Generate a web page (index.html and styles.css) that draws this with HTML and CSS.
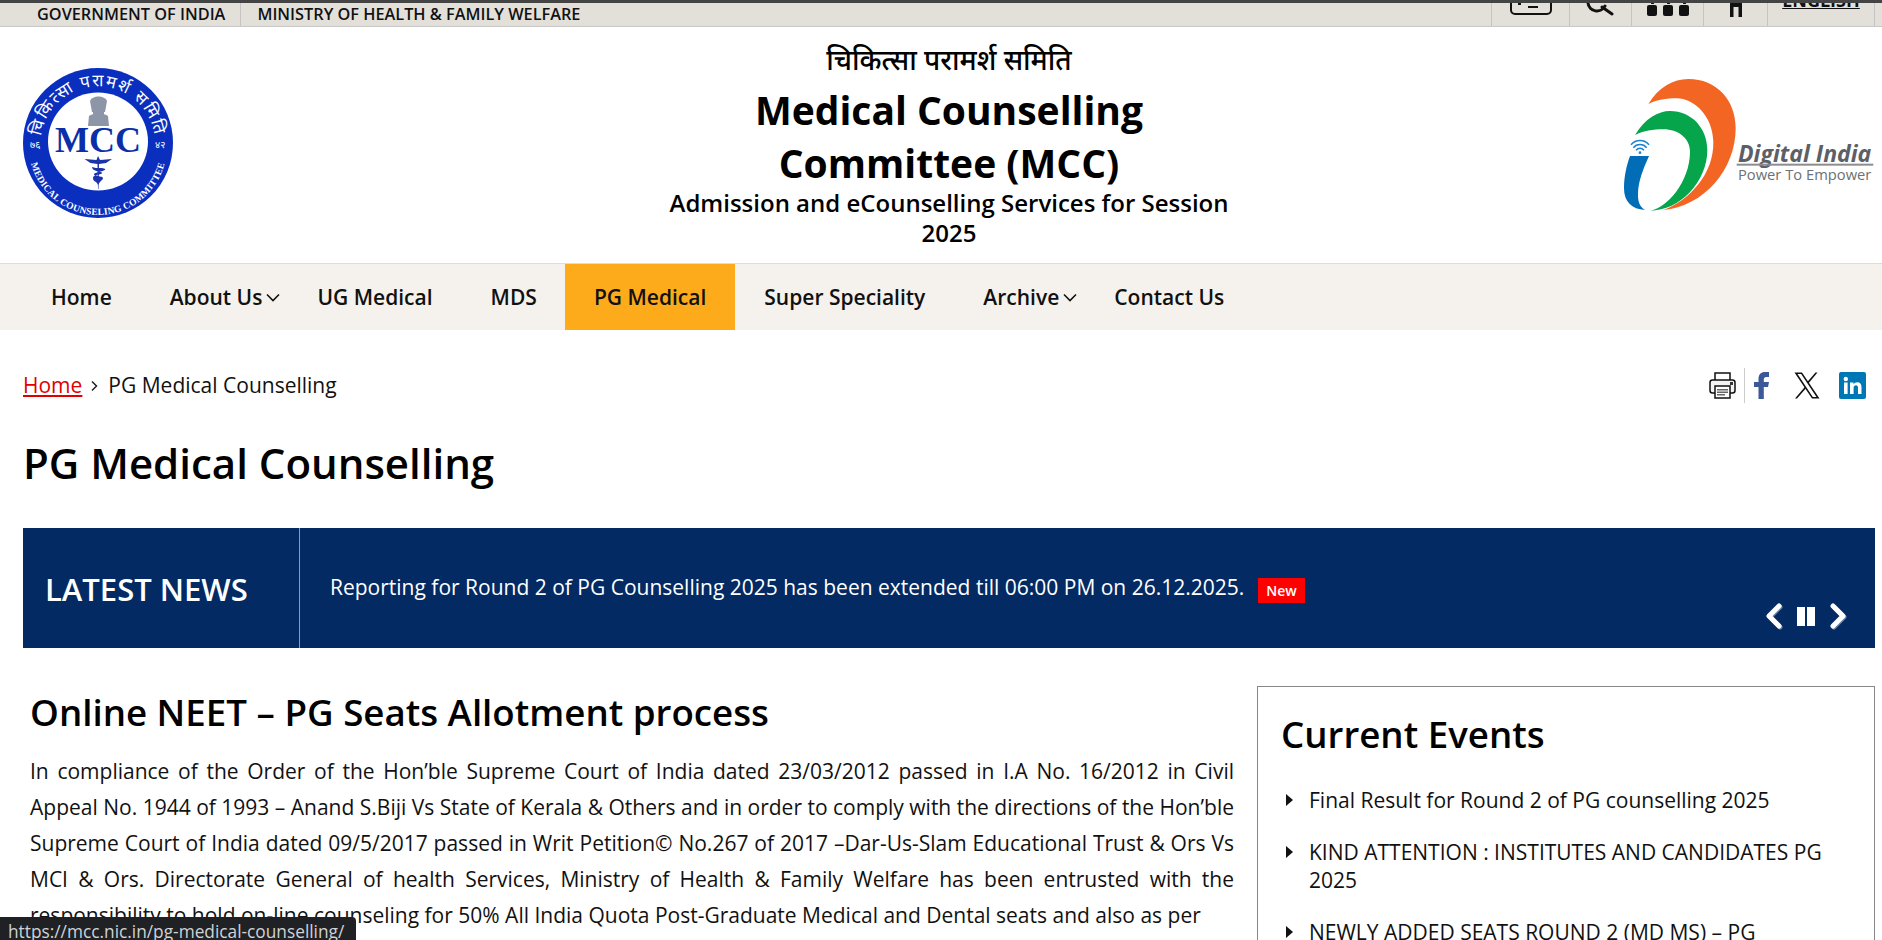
FILE: index.html
```html
<!DOCTYPE html>
<html lang="en">
<head>
<meta charset="utf-8">
<title>PG Medical Counselling</title>
<link rel="stylesheet" href="styles.css">
</head>
<body>
<div class="page">
  <div class="topbar">
    <ul class="gov">
      <li>GOVERNMENT OF INDIA</li>
      <li>MINISTRY OF HEALTH &amp; FAMILY WELFARE</li>
    </ul>
    <div class="tools">
      <div class="tool t1"><svg width="44" height="16" viewBox="0 0 44 16"><path d="M2 0V7a4 4 0 0 0 4 4H38a4 4 0 0 0 4-4V0" fill="none" stroke="#111" stroke-width="2"/><rect x="19" y="3" width="10" height="2" fill="#111"/><rect x="9" y="0" width="3" height="2" fill="#111"/></svg></div>
      <div class="tool t2"><svg width="30" height="16" viewBox="0 0 30 16"><path d="M2 0a9 9 0 0 0 17 3M16 4l10 7" fill="none" stroke="#111" stroke-width="3" stroke-linecap="round"/></svg></div>
      <div class="tool t3"><svg width="44" height="18" viewBox="0 0 44 18"><g fill="#111"><rect x="1" y="2" width="10" height="11" rx="2"/><rect x="17" y="2" width="10" height="11" rx="2"/><rect x="33" y="2" width="10" height="11" rx="2"/><rect x="5" y="0" width="3" height="1"/><rect x="21" y="0" width="3" height="1"/><rect x="37" y="0" width="3" height="1"/></g></svg></div>
      <div class="tool t4"><svg width="12" height="17" viewBox="0 0 12 17"><path d="M0 0H12V14H8.500V4H3.500V14H0Z" fill="#111"/></svg></div>
      <div class="tool t5"><span class="lang">ENGLISH</span></div>
      <div class="tool t6"></div>
    </div>
  </div>

  <header class="masthead">
    <div class="logo-left">
      <svg width="150" height="150" viewBox="0 0 150 150">
        <defs>
          <path id="arcTop" d="M18.400 82A57 57 0 1 1 131.600 82"/>
          <path id="arcBot" d="M6 78A69 69 0 0 0 144 78"/>
        </defs>
        <circle cx="75" cy="75" r="75" fill="#0a2fbf"/>
        <ellipse cx="75" cy="73.500" rx="50" ry="49" fill="#fff"/>
        <text class="arc-hi"><textPath href="#arcTop" startOffset="50%" text-anchor="middle">चिकित्सा परामर्श समिति</textPath></text>
        <text class="arc-en"><textPath href="#arcBot" startOffset="50%" text-anchor="middle">MEDICAL COUNSELING COMMITTEE</textPath></text>
        <text class="arc-n" x="7" y="80">७६</text>
        <text class="arc-n" x="132" y="80">४२</text>
        <g fill="#8d95a8">
          <path d="M67 33c2-6 15-6 17 0l-2 11H69Z"/>
          <path d="M66 48c3-3 16-3 19 0l1 10H65Z"/>
          <rect x="70" y="44" width="11" height="4"/>
        </g>
        <text class="mcc" x="75" y="84" text-anchor="middle">MCC</text>
        <g fill="#1a33a8">
          <path d="M75 88l-1.500 4-12-1 6 4 7 1 .5 25 .5 0 .5-25 7-1 6-4-12 1Z"/>
          <path d="M69 99c5 2 11 0 13 2s-10 3-11 5 9 2 9 4-3 3-5 7c-1-4-5-3-5-7s9-3 9-5-10-1-10-6Z"/>
        </g>
      </svg>
    </div>
    <div class="head-center">
      <div class="hindi">चिकित्सा परामर्श समिति</div>
      <h1 class="org">Medical Counselling<br>Committee (MCC)</h1>
      <div class="sub">Admission and eCounselling Services for Session 2025</div>
    </div>
    <div class="logo-right">
      <svg width="260" height="150" viewBox="510 210 780 450">
        <path d="M595 312C625 262 670 237 715 237C800 237 857 300 857 385C857 510 760 620 640 630C720 600 792 520 790 425C788 345 730 295 680 295C650 295 620 300 595 312Z" fill="#f36523"/>
        <path d="M555 405C585 355 625 333 660 333C725 333 772 385 772 450C772 545 690 632 600 632C650 625 720 545 720 455C720 415 685 388 640 388C610 388 580 393 555 405Z" fill="#06a44b"/>
        <path d="M540 468H597C578 510 565 545 564 580C563 605 570 622 585 630C545 628 522 605 522 565C522 530 530 495 540 468Z" fill="#006db6"/>
        <g fill="none" stroke="#1b82cf" stroke-width="4.500">
          <path d="M543 434A36 36 0 0 1 597 434"/>
          <path d="M550 443A26 26 0 0 1 590 443"/>
          <path d="M558 451A15 15 0 0 1 582 451"/>
        </g>
        <circle cx="570" cy="458" r="4" fill="#1b82cf"/>
        <text class="di-name" x="864" y="487" textLength="400" lengthAdjust="spacingAndGlyphs">Digital India</text>
        <rect x="860" y="491" width="410" height="6" fill="#8b8d90"/>
        <text class="di-tag" x="864" y="541" textLength="400" lengthAdjust="spacingAndGlyphs">Power To Empower</text>
      </svg>
    </div>
  </header>

  <nav class="nav">
    <a class="nav-item" href="#">Home</a>
    <a class="nav-item has-sub" href="#">About Us<svg class="chev" width="14" height="9" viewBox="0 0 14 9"><path d="M1 1.500 7 7.500l6-6" fill="none" stroke="#111" stroke-width="1.600"/></svg></a>
    <a class="nav-item" href="#">UG Medical</a>
    <a class="nav-item" href="#">MDS</a>
    <a class="nav-item active" href="#">PG Medical</a>
    <a class="nav-item" href="#">Super Speciality</a>
    <a class="nav-item has-sub" href="#">Archive<svg class="chev" width="14" height="9" viewBox="0 0 14 9"><path d="M1 1.500 7 7.500l6-6" fill="none" stroke="#111" stroke-width="1.600"/></svg></a>
    <a class="nav-item" href="#">Contact Us</a>
  </nav>

  <main class="content">
    <div class="crumbs">
      <div class="trail"><a class="crumb-link" href="#">Home</a><svg class="crumb-sep" width="9" height="12" viewBox="0 0 9 12"><path d="M2 1.500 6.500 6 2 10.500" fill="none" stroke="#222" stroke-width="1.500"/></svg><span>PG Medical Counselling</span></div>
      <div class="share">
        <svg class="ic-print" width="27" height="27" viewBox="0 0 27 27"><g fill="none" stroke="#111" stroke-width="1.500"><path d="M6 8V1H21V8"/><rect x="1" y="8" width="25" height="13" rx="2.500" fill="#f4f4f4"/><rect x="6" y="14" width="15" height="12" fill="#fff"/></g><rect x="21" y="10" width="3" height="3" fill="#333"/><g fill="#666"><rect x="8" y="17" width="11" height="1.500"/><rect x="8" y="19.500" width="11" height="1.500"/><rect x="8" y="22" width="8" height="1.500"/></g></svg>
        <span class="share-sep"></span>
        <svg class="ic-fb" width="15" height="27" viewBox="0 0 15 27"><path d="M4.500 27V15H0V10H4.500V7C4.500 2.500 7 0 11 0H15V5H12.500C10.500 5 9.800 6 9.800 7.500V10H15L14 15H9.800V27Z" fill="#3b5998"/></svg>
        <svg class="ic-x" width="26" height="27" viewBox="0 0 26 27"><path d="M0.500 0.500H8L25.500 26.500H18ZM3.500 2.100 18.800 24.900H22.500L7.200 2.100Z" fill="#111" fill-rule="evenodd"/><path d="M23.500 0.500 14.500 11.200 13.500 9.800 21.500 0.500ZM11 14.800 12 16.200 3 26.500H1Z" fill="#111"/></svg>
        <svg class="ic-in" width="27" height="27" viewBox="0 0 27 27"><rect width="27" height="27" rx="2" fill="#0077b5"/><rect x="5" y="10.500" width="3.600" height="11.500" fill="#fff"/><circle cx="6.800" cy="7" r="2.200" fill="#fff"/><path d="M11 10.500H14.500V12.200C15.300 11 16.600 10.200 18.200 10.200 21 10.200 22.500 12 22.500 15.200V22H19V15.800C19 14.200 18.300 13.200 17 13.200S14.600 14.200 14.600 15.800V22H11Z" fill="#fff"/></svg>
      </div>
    </div>

    <h1 class="page-title">PG Medical Counselling</h1>

    <section class="news">
      <div class="news-label">LATEST NEWS</div>
      <div class="news-body">
        <p class="news-text">Reporting for Round 2 of PG Counselling 2025 has been extended till 06:00 PM on 26.12.2025.<span class="badge">New</span></p>
        <div class="news-ctrl">
          <svg class="ctrl-arrow" width="16" height="26" viewBox="0 0 16 26"><path d="M13 3 3 13l10 10" fill="none" stroke="#fff" stroke-width="5" stroke-linecap="round" stroke-linejoin="round"/></svg>
          <svg width="18" height="19" viewBox="0 0 18 19"><rect width="8" height="19" fill="#fff"/><rect x="10" width="8" height="19" fill="#fff"/></svg>
          <svg class="ctrl-arrow" width="16" height="26" viewBox="0 0 16 26"><path d="M3 3l10 10L3 23" fill="none" stroke="#fff" stroke-width="5" stroke-linecap="round" stroke-linejoin="round"/></svg>
        </div>
      </div>
    </section>

    <div class="columns">
      <article class="article">
        <h2 class="article-title">Online NEET – PG Seats Allotment process</h2>
        <p class="article-text">In compliance of the Order of the Hon’ble Supreme Court of India dated 23/03/2012 passed in I.A No. 16/2012 in Civil Appeal No. 1944 of 1993 – Anand S.Biji Vs State of Kerala &amp; Others and in order to comply with the directions of the Hon’ble Supreme Court of India dated 09/5/2017 passed in Writ Petition© No.267 of 2017 –Dar-Us-Slam Educational Trust &amp; Ors Vs MCI &amp; Ors. Directorate General of health Services, Ministry of Health &amp; Family Welfare has been entrusted with the responsibility to hold on-line counseling for 50% All India Quota Post-Graduate Medical and Dental seats and also as per</p>
      </article>
      <aside class="events">
        <h2 class="events-title">Current Events</h2>
        <ul class="events-list">
          <li>Final Result for Round 2 of PG counselling 2025</li>
          <li>KIND ATTENTION : INSTITUTES AND CANDIDATES PG 2025</li>
          <li>NEWLY ADDED SEATS ROUND 2 (MD MS) – PG</li>
        </ul>
      </aside>
    </div>
  </main>
  <div class="status">https://mcc.nic.in/pg-medical-counselling/</div>
</div>
</body>
</html>
```
FILE: styles.css
```css
* { box-sizing: border-box; }
html, body { margin: 0; padding: 0; height: 100%; overflow: hidden; background: #fff; }
body { font-family: "Open Sans", "Noto Sans", "Liberation Sans", sans-serif; color: #000; }
.page { position: relative; width: 1882px; height: 940px; overflow: hidden; }
h1, h2, p, ul { margin: 0; padding: 0; }
ul { list-style: none; }
a { color: inherit; text-decoration: none; }

.topbar { display: flex; justify-content: space-between; height: 27px; background: #e3e0d9; border-top: 3px solid #444; border-bottom: 1px solid #c8c8c8; overflow: hidden; }
.gov { display: flex; padding-left: 21px; }
.gov li { height: 23px; padding: 1px 15px 0 16px; font-size: 16.300px; font-weight: 600; line-height: 21px; color: #111; }
.gov li + li { border-left: 1px solid #c4c4c4; }
.tools { display: flex; height: 23px; }
.tool { display: flex; justify-content: center; align-items: flex-start; border-left: 1px solid #c4c4c4; }
.t1 { width: 78px; }
.t2 { width: 62px; }
.t3 { width: 72px; }
.t4 { width: 64px; }
.t5 { width: 107px; overflow: hidden; }
.t6 { width: 8px; }
.lang { margin-top: -13px; font-size: 18px; font-weight: 700; line-height: 20px; text-decoration: underline; color: #111; }

.masthead { display: grid; grid-template-columns: 649px 600px 1fr; height: 236px; }
.logo-left { padding: 41px 0 0 23px; }
.logo-right { padding: 43px 0 0 371px; }
.arc-hi { font-size: 17px; fill: #fff; font-family: "Noto Sans", "DejaVu Sans", sans-serif; letter-spacing: 1.500px; }
.arc-en { font-size: 9.500px; font-weight: 700; fill: #fff; font-family: "Liberation Serif", serif; letter-spacing: .2px; }
.arc-n { font-size: 10px; fill: #fff; font-family: "Noto Sans", "DejaVu Sans", sans-serif; }
.mcc { font-family: "Liberation Serif", serif; font-weight: 700; font-size: 36px; fill: #0a2fa8; }
.di-name { font-family: "Open Sans", sans-serif; font-style: italic; font-weight: 700; font-size: 70px; fill: #5c6066; }
.di-tag { font-family: "Open Sans", sans-serif; font-size: 46px; fill: #6d7074; }
.head-center { text-align: center; padding-top: 12px; }
.hindi { font-size: 28px; line-height: 41px; font-weight: 500; }
.org { font-size: 39px; line-height: 53px; font-weight: 700; margin-top: 3px; }
.sub { font-size: 24px; line-height: 30px; font-weight: 600; margin-top: -1px; }

.nav { display: flex; height: 67px; padding-left: 22px; background: #f5f2ed; border-top: 1px solid #ddd; }
.nav-item { display: flex; align-items: center; padding: 0 29px; font-size: 21px; font-weight: 600; color: #111; }
.nav-item.has-sub { padding-right: 8px; }
.nav-item.has-sub .chev { margin-left: 4px; margin-top: 1px; }
.nav-item.active { background: #fdab1b; margin-left: -1px; }

.content { padding: 0 7px 0 23px; }
.crumbs { display: flex; justify-content: space-between; align-items: center; height: 110px; }
.trail { display: flex; align-items: center; font-size: 21px; color: #111; }
.crumb-link { color: #e00000; text-decoration: underline; }
.crumb-sep { margin: 2px 9px 0 8px; }
.share { display: flex; align-items: center; padding-right: 9px; }
.share-sep { width: 1px; height: 35px; background: #ccc; margin: 0 9px 0 8px; }
.ic-fb { margin-right: 25px; }
.ic-x { margin-right: 19px; }
.page-title { font-size: 42px; line-height: 54px; font-weight: 600; color: #000; margin-top: -4px; }

.news { display: flex; height: 120px; margin-top: 38px; background: #032a62; color: #fff; }
.news-label { width: 277px; padding: 41px 0 0 22px; font-size: 31px; line-height: 40px; font-weight: 600; border-right: 1px solid #8a9bb5; }
.news-body { position: relative; flex: 1; padding: 44px 0 0 30px; }
.news-text { font-size: 21px; line-height: 30px; }
.badge { display: inline-block; margin-left: 14px; padding: 0 8px; height: 25px; background: #f00; font-size: 14px; font-weight: 600; line-height: 25px; vertical-align: -1px; }
.news-ctrl { position: absolute; right: 29px; bottom: 19px; display: flex; align-items: center; gap: 15px; }
.ctrl-arrow { filter: drop-shadow(1px 1px 0 #6a7ea0); }

.columns { display: flex; margin-top: 38px; }
.article { width: 1211px; padding: 0 0 0 7px; }
.article-title { font-size: 36.700px; line-height: 50px; font-weight: 600; margin-top: 1px; }
.article-text { margin-top: 16px; font-size: 21px; line-height: 36px; text-align: justify; color: #111; }
.events { width: 618px; margin-left: 23px; padding: 22px 23px 0; border: 1px solid #888; height: 400px; }
.events-title { font-size: 36.700px; line-height: 50px; font-weight: 600; }
.events-list { margin-top: 27px; padding-left: 4px; }
.events-list li { position: relative; padding-left: 24px; margin-bottom: 24px; font-size: 21px; line-height: 28px; color: #111; }
.events-list li::before { content: ""; position: absolute; left: 1px; top: 8px; border-left: 7px solid #111; border-top: 6px solid transparent; border-bottom: 6px solid transparent; }

.status { position: absolute; left: 0; bottom: 0; height: 23px; width: 356px; padding: 2px 0 0 8px; background: #202124; border-top-right-radius: 4px; color: #cfd3d6; font-family: "Open Sans", sans-serif; font-size: 17.300px; line-height: 26px; overflow: hidden; white-space: nowrap; }
```
